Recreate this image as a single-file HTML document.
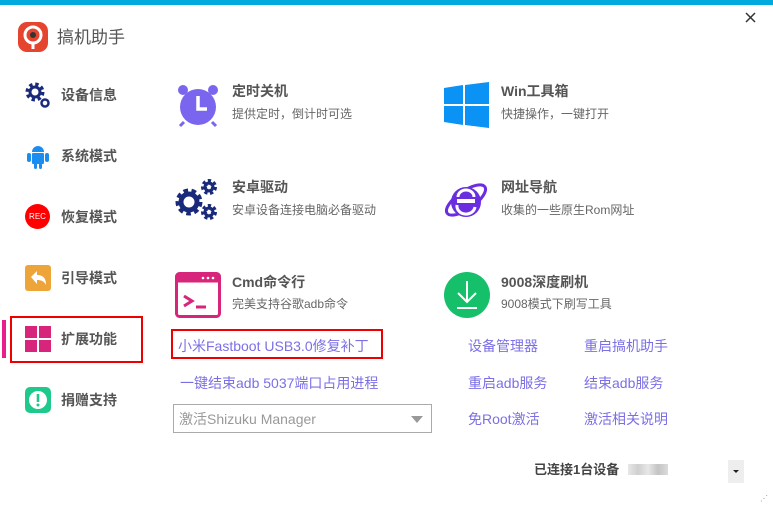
<!DOCTYPE html>
<html><head><meta charset="utf-8"><style>
*{margin:0;padding:0;box-sizing:border-box}
body{width:773px;height:506px;background:#fff;position:relative;overflow:hidden;font-family:"Liberation Sans","Noto Sans CJK SC",sans-serif;color:#555}
.a{position:absolute;white-space:nowrap}
.nav{font-size:14px;font-weight:bold;color:#555;line-height:20px}
.t{font-size:14px;font-weight:bold;color:#555;line-height:20px}
.d{font-size:12px;color:#666;line-height:18px}
.l{font-size:14px;color:#7b6fe6;line-height:20px}
</style></head><body>
<div class="a" style="left:0;top:0;width:773px;height:5px;background:#00aadf"></div>
<svg class="a" style="left:745px;top:12px" width="11" height="11" viewBox="0 0 11 11"><path d="M1 1l9 9M10 1l-9 9" stroke="#333" stroke-width="1.5"/></svg>
<svg class="a" style="left:18px;top:22px" width="30" height="30" viewBox="0 0 30 30"><rect x="0" y="0" width="30" height="30" rx="9" fill="#e5442e"/><circle cx="15" cy="13" r="8" fill="none" stroke="#fff" stroke-width="3"/><circle cx="15" cy="13" r="3" fill="#333"/><rect x="13.5" y="20" width="3" height="7" fill="#fff"/></svg>
<div class="a" style="left:57px;top:27px;font-size:17px;color:#555;line-height:22px">搞机助手</div>

<svg class="a" style="left:25px;top:82px" width="26" height="26" viewBox="0 0 26 26"><circle cx="10" cy="10" r="7" fill="none" stroke="#1a2a7a" stroke-width="5" stroke-dasharray="3 2.5"/><circle cx="10" cy="10" r="5" fill="none" stroke="#1a2a7a" stroke-width="3"/><circle cx="20" cy="21" r="3.5" fill="none" stroke="#1a2a7a" stroke-width="2.5"/></svg>
<div class="a nav" style="left:61px;top:85px">设备信息</div>
<svg class="a" style="left:26px;top:144px" width="24" height="26" viewBox="0 0 24 26"><path d="M6 8a6 6 0 0 1 12 0z" fill="#1a8ef0"/><rect x="6" y="9" width="12" height="11" rx="1" fill="#1a8ef0"/><rect x="1" y="9" width="4" height="9" rx="2" fill="#1a8ef0"/><rect x="19" y="9" width="4" height="9" rx="2" fill="#1a8ef0"/><rect x="8" y="19" width="3" height="6" rx="1.5" fill="#1a8ef0"/><rect x="13" y="19" width="3" height="6" rx="1.5" fill="#1a8ef0"/></svg>
<div class="a nav" style="left:61px;top:146px">系统模式</div>
<div class="a" style="left:25px;top:204px;width:25px;height:25px;border-radius:50%;background:#f00;color:#fff;font-size:8px;text-align:center;line-height:25px">REC</div>
<div class="a nav" style="left:61px;top:207px">恢复模式</div>
<svg class="a" style="left:25px;top:265px" width="26" height="26" viewBox="0 0 26 26"><rect width="26" height="26" rx="3" fill="#eda53a"/><path d="M6 12l6-6v4c6 0 9 3 9 10-2-4-5-5-9-5v4z" fill="#fff"/></svg>
<div class="a nav" style="left:61px;top:268px">引导模式</div>
<div class="a" style="left:2px;top:320px;width:4px;height:38px;background:#e91e8c"></div>
<div class="a" style="left:10px;top:316px;width:133px;height:47px;border:2px solid #e00"></div>
<svg class="a" style="left:25px;top:326px" width="26" height="26" viewBox="0 0 26 26" fill="#d6257a"><rect width="12" height="12"/><rect x="14" width="12" height="12"/><rect y="14" width="12" height="12"/><rect x="14" y="14" width="12" height="12"/></svg>
<div class="a nav" style="left:61px;top:329px">扩展功能</div>
<svg class="a" style="left:25px;top:387px" width="26" height="26" viewBox="0 0 26 26"><rect width="26" height="26" rx="5" fill="#1ec98c"/><circle cx="13" cy="13" r="9" fill="#fff"/><rect x="11.7" y="7" width="2.6" height="8" fill="#1ec98c"/><circle cx="13" cy="18" r="1.5" fill="#1ec98c"/></svg>
<div class="a nav" style="left:61px;top:390px">捐赠支持</div>

<svg class="a" style="left:175px;top:82px" width="46" height="46" viewBox="0 0 46 46"><circle cx="23" cy="25" r="18" fill="#7a66ee"/><circle cx="8" cy="8" r="5" fill="#7a66ee"/><circle cx="38" cy="8" r="5" fill="#7a66ee"/><path d="M9 40l-4 4M37 40l4 4" stroke="#7a66ee" stroke-width="3"/><path d="M23 14v13h9" stroke="#fff" stroke-width="3.5" fill="none"/></svg>
<div class="a t" style="left:232px;top:81px">定时关机</div>
<div class="a d" style="left:232px;top:105px">提供定时，倒计时可选</div>
<svg class="a" style="left:444px;top:82px" width="46" height="46" viewBox="0 0 46 46" fill="#0a93f5"><path d="M0 6l19-3v19H0z"/><path d="M21 3l24-3v22H21z"/><path d="M0 24h19v19L0 40z"/><path d="M21 24h24v22l-24-3z"/></svg>
<div class="a t" style="left:501px;top:81px">Win工具箱</div>
<div class="a d" style="left:501px;top:105px">快捷操作，一键打开</div>

<svg class="a" style="left:175px;top:177px" width="46" height="46" viewBox="0 0 46 46"><circle cx="14" cy="25" r="10" fill="none" stroke="#1a2a7a" stroke-width="7" stroke-dasharray="4 3"/><circle cx="14" cy="25" r="8" fill="none" stroke="#1a2a7a" stroke-width="5"/><circle cx="34" cy="10" r="5" fill="none" stroke="#1a2a7a" stroke-width="6" stroke-dasharray="2.5 2"/><circle cx="34" cy="10" r="4" fill="none" stroke="#1a2a7a" stroke-width="3"/><circle cx="34" cy="35" r="5" fill="none" stroke="#1a2a7a" stroke-width="6" stroke-dasharray="2.5 2"/><circle cx="34" cy="35" r="4" fill="none" stroke="#1a2a7a" stroke-width="3"/></svg>
<div class="a t" style="left:232px;top:177px">安卓驱动</div>
<div class="a d" style="left:232px;top:201px">安卓设备连接电脑必备驱动</div>
<svg class="a" style="left:443px;top:177px" width="46" height="46" viewBox="0 0 46 46"><ellipse cx="23" cy="23" rx="23" ry="9" transform="rotate(-35 23 23)" fill="none" stroke="#6a2ee0" stroke-width="3"/><circle cx="23" cy="25" r="15" fill="#6a2ee0"/><rect x="14" y="22" width="18" height="4" fill="#fff"/><path d="M15 20a8 7 0 0 1 16 0" fill="none" stroke="#fff" stroke-width="3"/><path d="M14 28a9 8 0 0 0 18 2" fill="none" stroke="#fff" stroke-width="3"/></svg>
<div class="a t" style="left:501px;top:177px">网址导航</div>
<div class="a d" style="left:501px;top:201px">收集的一些原生Rom网址</div>

<svg class="a" style="left:175px;top:272px" width="46" height="46" viewBox="0 0 46 46"><rect x="1.5" y="1.5" width="43" height="43" rx="3" fill="#fff" stroke="#d6257a" stroke-width="3"/><rect x="1.5" y="1.5" width="43" height="9" fill="#d6257a"/><circle cx="28" cy="6" r="1.3" fill="#fff"/><circle cx="33" cy="6" r="1.3" fill="#fff"/><circle cx="38" cy="6" r="1.3" fill="#fff"/><path d="M9 24l8 5-8 5" fill="none" stroke="#d6257a" stroke-width="3"/><path d="M21 35h10" stroke="#d6257a" stroke-width="3"/></svg>
<div class="a t" style="left:232px;top:272px">Cmd命令行</div>
<div class="a d" style="left:232px;top:295px">完美支持谷歌adb命令</div>
<svg class="a" style="left:444px;top:272px" width="46" height="46" viewBox="0 0 46 46"><circle cx="23" cy="23" r="23" fill="#16c06a"/><path d="M23 9v21M14 21l9 9 9-9M13 36h20" fill="none" stroke="#fff" stroke-width="2"/></svg>
<div class="a t" style="left:501px;top:272px">9008深度刷机</div>
<div class="a d" style="left:501px;top:295px">9008模式下刷写工具</div>

<div class="a" style="left:171px;top:329px;width:212px;height:30px;border:2px solid #e00"></div>
<div class="a l" style="left:178px;top:336px">小米Fastboot USB3.0修复补丁</div>
<div class="a l" style="left:180px;top:373px">一键结束adb 5037端口占用进程</div>
<div class="a" style="left:173px;top:404px;width:259px;height:29px;border:1px solid #aaa"></div>
<div class="a" style="left:179px;top:409px;font-size:14px;color:#999;line-height:20px">激活Shizuku Manager</div>
<div class="a" style="left:411px;top:416px;width:0;height:0;border-left:6px solid transparent;border-right:6px solid transparent;border-top:7px solid #999"></div>
<div class="a l" style="left:468px;top:336px">设备管理器</div>
<div class="a l" style="left:584px;top:336px">重启搞机助手</div>
<div class="a l" style="left:468px;top:373px">重启adb服务</div>
<div class="a l" style="left:584px;top:373px">结束adb服务</div>
<div class="a l" style="left:468px;top:409px">免Root激活</div>
<div class="a l" style="left:584px;top:409px">激活相关说明</div>

<div class="a" style="left:534px;top:461px;font-size:13px;font-weight:bold;color:#444;line-height:18px">已连接1台设备</div>
<div class="a" style="left:628px;top:464px;width:40px;height:11px;background:linear-gradient(90deg,#ddd,#bbb,#ddd,#aaa,#ccc);opacity:.7"></div>
<div class="a" style="left:728px;top:460px;width:16px;height:23px;background:#eee"></div>
<div class="a" style="left:733px;top:470px;width:0;height:0;border-left:3px solid transparent;border-right:3px solid transparent;border-top:3px solid #222"></div>
<div class="a" style="left:760px;top:494px;font-size:8px;color:#999">⋰</div>
</body></html>
